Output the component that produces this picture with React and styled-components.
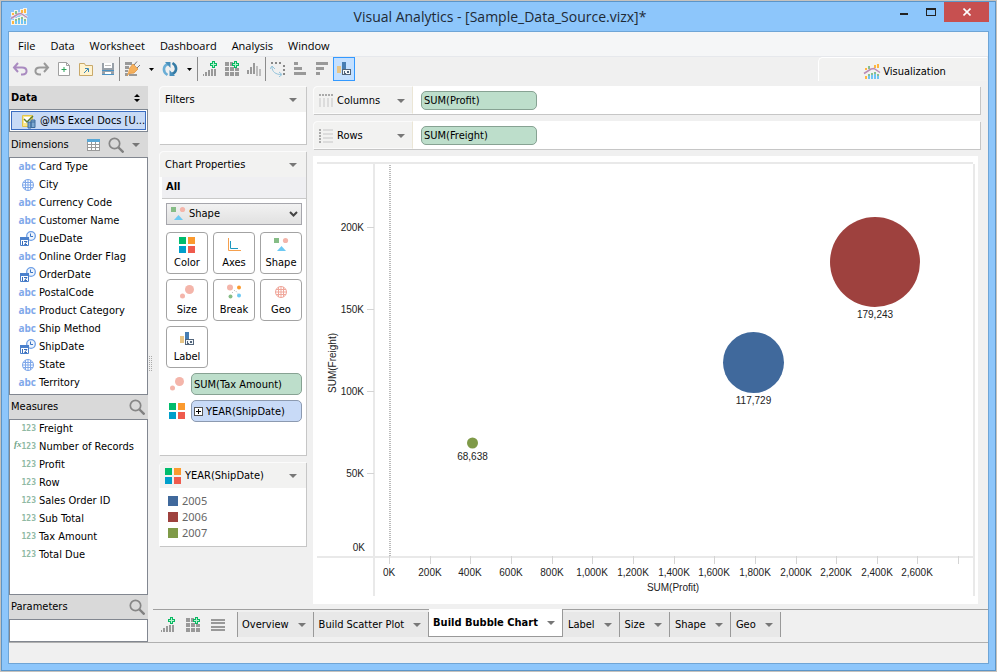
import { useState } from 'react';
import styled, { createGlobalStyle } from 'styled-components';

const GlobalStyle = createGlobalStyle`
    * {
        box-sizing: border-box;
    }
    body {
        margin: 0;
        color: #000;
        font-family: "DejaVu Sans Condensed", "Noto Sans", sans-serif;
        font-size: 11px;
        line-height: 16px;
    }
    button, select, input {
        font: inherit;
        color: inherit;
        margin: 0;
    }
    ul, h1, h2 {
        margin: 0;
        padding: 0;
        list-style: none;
        font: inherit;
    }
    svg {
        display: block;
        flex: none;
    }
`;

/* window frame */

const Frame = styled.div`
    min-height: 100vh;
    display: flex;
    border: 1px solid #c6c2bd;
`;

const Shell = styled.div`
    flex: 1;
    min-width: 0;
    display: flex;
    flex-direction: column;
    padding: 0 6px 6px;
    background: #8dc6fb;
    border: 1px solid #5c95c8;
`;

const TitleBar = styled.header`
    display: grid;
    grid-template-columns: 100px 1fr 100px;
    height: 29px;
    align-items: center;
    padding-left: 3px;
    h1 {
        font-family: "Open Sans", sans-serif;
        font-size: 14px;
        line-height: 20px;
        text-align: center;
        color: #1e2a36;
        white-space: nowrap;
    }
`;

const WindowButtons = styled.div`
    display: flex;
    justify-content: flex-end;
    align-self: start;
`;

const WindowButton = styled.button`
    width: ${p => (p.$close ? '45px' : '27px')};
    height: 20px;
    padding: 0;
    border: 0;
    display: flex;
    align-items: center;
    justify-content: center;
    background: ${p => (p.$close ? '#c75050' : 'transparent')};
`;

const Client = styled.div`
    flex: 1;
    display: flex;
    flex-direction: column;
    border: 1px solid #6fa5d6;
    background: #f0f0f0;
`;

const MenuBar = styled.nav`
    display: flex;
    gap: 1px;
    height: 25px;
    padding-left: 2px;
    background: #f5f6f7;
    border-bottom: 1px solid #e6e8ec;
`;

const MenuItem = styled.button`
    border: 0;
    padding: 4px 7px 0;
    background: transparent;
    font-family: "Open Sans", sans-serif;
    font-size: 11px;
    line-height: 18px;
`;

/* toolbar */

const ToolRow = styled.div`
    display: flex;
    justify-content: space-between;
    height: 29px;
    align-items: flex-start;
`;

const Tools = styled.div`
    display: flex;
    align-items: center;
`;

const ToolButton = styled.button`
    width: ${p => (p.$narrow ? '16px' : '22px')};
    height: 24px;
    padding: 0;
    display: flex;
    align-items: center;
    justify-content: center;
    background: ${p => (p.$on ? '#c4e0ff' : 'transparent')};
    border: 1px solid ${p => (p.$on ? '#3399ff' : 'transparent')};
`;

const Divider = styled.span`
    width: 1px;
    height: 24px;
    margin-right: 1px;
    background: #8c8c8c;
`;

const ViewTab = styled.button`
    display: flex;
    align-items: center;
    justify-content: center;
    gap: 3px;
    width: 169px;
    height: 24px;
    margin-right: 1px;
    padding: 4px 0 0 4px;
    border: 0;
    border-top: 1px solid #fff;
    border-left: 1px solid #fff;
    border-radius: 5px 0 0 0;
    background: #f2f2f1;
`;

/* body */

const Workspace = styled.div`
    flex: 1;
    display: flex;
`;

const Sidebar = styled.aside`
    width: 139px;
    display: flex;
    flex-direction: column;
    background: #d9d9d9;
`;

const SideHeader = styled.div`
    display: flex;
    align-items: center;
    gap: 8px;
    height: ${p => (p.$top ? '23px' : '24px')};
    padding: 0 ${p => (p.$inset ? '8px' : '3px')} 0 2px;
    background: #d9d9d9;
    h2 {
        flex: 1;
        font-weight: ${p => (p.$top ? 'bold' : 'normal')};
    }
`;

const IconButton = styled.button`
    padding: 0;
    border: 0;
    background: none;
    display: flex;
`;

const SourceButton = styled.button`
    display: flex;
    align-items: center;
    gap: 4px;
    height: 23px;
    margin-bottom: 1px;
    padding: 0 0 0 10px;
    white-space: nowrap;
    background: #c7daf6;
    border: 1px solid #7f8791;
    outline: 1px solid #3a6cc0;
    outline-offset: -3px;
    box-shadow: inset 0 0 0 1px #fff;
`;

const FieldList = styled.ul`
    flex: ${p => (p.$grow ? '1' : 'none')};
    min-height: 23px;
    padding-bottom: 2px;
    background: #fff;
    border: 1px solid #828790;
`;

const Field = styled.li`
    display: flex;
    align-items: center;
    height: 18px;
    padding-bottom: 1px;
    white-space: nowrap;
`;

const FieldIcon = styled.span`
    width: 29px;
    padding-right: 3px;
    display: flex;
    align-items: center;
    justify-content: flex-end;
`;

const TextGlyph = styled.span`
    padding-bottom: 2px;
    font-family: "Open Sans", sans-serif;
    font-weight: bold;
    font-size: 10px;
    color: #7fa8ea;
`;

const NumberGlyph = styled.span`
    font-family: "DejaVu Sans Mono", monospace;
    font-weight: bold;
    font-size: 8px;
    color: #8fb9a4;
`;

const CalcGlyph = styled.i`
    padding-bottom: 5px;
    font-family: "Liberation Serif", serif;
    font-weight: bold;
    font-size: 9px;
    color: #6fa58a;
`;

const Splitter = styled.div`
    width: 5px;
    display: flex;
    align-items: center;
    justify-content: center;
`;

const Main = styled.main`
    flex: 1;
    min-width: 0;
    display: flex;
    flex-direction: column;
`;

const Body = styled.div`
    flex: 1;
    display: flex;
    gap: 7px;
    padding: 0 10px 5px 6px;
`;

const Panels = styled.div`
    width: 147px;
    display: flex;
    flex-direction: column;
    gap: 7px;
`;

const Card = styled.section`
    background: #fff;
    border-radius: 5px 0 0 0;
    box-shadow: 1px 1px 0 #c6c6c6;
    padding-bottom: ${p => p.$bottom}px;
`;

const CardHeader = styled.div`
    display: flex;
    align-items: center;
    gap: 4px;
    height: 26px;
    padding: 1px 9px 0 5px;
    background: #f2f2f1;
    border: 1px solid #fbfbfb;
    border-width: 1px 0 0 1px;
    border-radius: 5px 0 0 0;
    h2 {
        flex: 1;
        white-space: nowrap;
    }
`;

const AllRow = styled.div`
    height: 22px;
    margin-left: 3px;
    padding: 2px 4px;
    font-weight: bold;
    background: #efeff2;
    border-bottom: 1px solid #c9c9c9;
`;

const CardContent = styled.div`
    display: flex;
    flex-direction: column;
    gap: 5px;
    padding: 4px 4px 0 7px;
`;

const Picker = styled.label`
    display: grid;
    align-items: center;
    margin-bottom: 2px;
    > * {
        grid-area: 1 / 1;
    }
    > svg {
        z-index: 1;
        margin-left: 4px;
        pointer-events: none;
    }
    > svg:last-child {
        justify-self: end;
        margin-right: 4px;
    }
`;

const Select = styled.select`
    appearance: none;
    height: 22px;
    padding: 0 20px 0 22px;
    border: 1px solid #a6a6ac;
    border-radius: 0;
    background: linear-gradient(#f2f2f2, #e1e1e1);
`;

const PropertyGrid = styled.div`
    display: grid;
    grid-template-columns: repeat(3, 42px);
    gap: 5px;
`;

const PropertyButton = styled.button`
    height: 42px;
    padding: 0 0 2px;
    display: flex;
    flex-direction: column;
    align-items: center;
    justify-content: flex-end;
    gap: 2px;
    background: #fff;
    border: 1px solid #a3a3a3;
    border-radius: 4px;
`;

const ShelfField = styled.div`
    display: flex;
    align-items: center;
    gap: 6px;
    padding-left: 3px;
`;

const Pill = styled.button`
    flex: ${p => (p.$width ? 'none' : '1')};
    width: ${p => (p.$width ? p.$width + 'px' : 'auto')};
    height: ${p => (p.$width ? '19px' : '22px')};
    display: flex;
    align-items: center;
    gap: 3px;
    padding: 1px 2px 0;
    white-space: nowrap;
    background: ${p => (p.$blue ? '#c8daf7' : '#bddecb')};
    border: 1px solid ${p => (p.$blue ? '#8c9ab0' : '#87a293')};
    border-radius: 5px;
`;

const Legend = styled.ul`
    padding: 5px 9px;
    color: #666;
    font-family: "Noto Sans", sans-serif;
    li {
        display: flex;
        align-items: center;
        gap: 4px;
        height: 16px;
    }
`;

const Swatch = styled.span`
    width: 10px;
    height: 10px;
    background: ${p => p.$color};
`;

const Canvas = styled.div`
    flex: 1;
    min-width: 0;
    display: flex;
    flex-direction: column;
    gap: 7px;
`;

const Shelf = styled.div`
    display: flex;
    align-items: center;
    height: 28px;
    margin-right: -2px;
    background: #fff;
    border-radius: 5px 0 0 0;
    box-shadow: 1px 1px 0 #c6c6c6;
`;

const ShelfLabel = styled.div`
    display: flex;
    align-items: center;
    gap: 3px;
    width: 100px;
    height: 28px;
    margin-right: 8px;
    padding: 1px 7px 0 4px;
    background: #f2f2f1;
    border: 1px solid #fbfbfb;
    border-right-color: #ebe6d6;
    border-radius: 5px 0 0 0;
    span {
        flex: 1;
    }
`;

const ChartArea = styled.div`
    flex: 1;
    background: #fff;
    svg {
        width: 100%;
        height: auto;
        font-family: "Liberation Sans", sans-serif;
        font-size: 10px;
        fill: #222;
    }
`;

const SheetBar = styled.div`
    display: flex;
    height: 33px;
    border-top: 1px solid #a0a0a0;
`;

const SheetTools = styled.div`
    display: flex;
    align-items: center;
    gap: 9px;
    width: 84px;
    height: 29px;
    padding-left: 7px;
`;

const SheetTab = styled.button`
    display: flex;
    align-items: center;
    gap: 9px;
    height: ${p => (p.$active ? '28px' : '25px')};
    margin-top: ${p => (p.$active ? '-1px' : '2px')};
    padding: 0 7px 0 ${p => (p.$first || p.$active ? '4px' : '5px')};
    border: 0;
    border-right: 1px solid #999;
    border-left: ${p => (p.$first ? '1px solid #999' : '0')};
    border-bottom: ${p => (p.$active ? '1px solid #999' : '0')};
    background: ${p => (p.$active ? '#fff' : '#e8e8e8')};
    font-weight: ${p => (p.$active ? 'bold' : 'normal')};
    white-space: nowrap;
`;

const StatusBar = styled.footer`
    height: 21px;
    border-top: 1px solid #b0b0b0;
`;

/* icons */

const Icon = ({ size = 16, children, ...rest }) => (
    <svg width={size} height={size} viewBox="0 0 16 16" fill="none" aria-hidden="true" {...rest}>{children}</svg>
);

const Caret = ({ color = '#777' }) => (
    <svg width="8" height="4" viewBox="0 0 8 4" aria-hidden="true"><path d="M0 0h8L4 4z" fill={color} /></svg>
);

const SmallCaret = () => (
    <svg width="5" height="3" viewBox="0 0 5 3" aria-hidden="true"><path d="M0 0h5L2.500 3z" fill="#000" /></svg>
);

const LogoIcon = ({ halo }) => {
    const bars = 'M1 4h2v2H1zM10 1h2v3h-2zM13 0h2v4h-2zM1 12h2v3H1zM4 2h2v3H4zM4 10h2v5H4zM7 9h2v6H7zM10 8h2v7h-2zM13 10h2v5h-2z';
    const line = 'M0 9.500L7 5l3-.5 6 4';
    return (
        <Icon overflow="visible">
            {halo && <path d={bars} stroke="#f3f3ee" strokeWidth="2" />}
            {halo && <path d={line} stroke="#f3f3ee" strokeWidth="3" />}
            <path d="M1 4h2v2H1zM10 1h2v3h-2zM13 0h2v4h-2zM1 12h2v3H1z" fill="#ffb640" />
            <path d="M4 2h2v3H4zM4 10h2v2H4zM7 9h2v2H7zM10 8h2v2h-2zM13 10h2v2h-2z" fill="#86c191" />
            <path d="M4 12h2v3H4zM7 11h2v4H7zM10 10h2v5h-2zM13 12h2v3h-2z" fill="#6fc4f4" />
            <path d={line} stroke="#b98bb5" strokeWidth="1.500" />
        </Icon>
    );
};

const UndoIcon = () => (
    <Icon><path d="M6 2L2 6.500 6 11M2 6.500h8c6 0 6 7 .5 7H9" stroke="#a98ac0" strokeWidth="2" /></Icon>
);
const RedoIcon = () => (
    <Icon><path d="M10 2l4 4.500L10 11M14 6.500H6c-6 0-6 7-.5 7H7" stroke="#999" strokeWidth="2" /></Icon>
);
const NewIcon = () => (
    <Icon>
        <path d="M2.500 1.500h8l3 3v10h-11z" fill="#fff" stroke="#a0a0a0" />
        <path d="M10.500 1.500v3h3" stroke="#a0a0a0" />
        <path d="M8 6v5M5.500 8.500h5" stroke="#2ca35a" />
    </Icon>
);
const OpenIcon = () => (
    <Icon>
        <path d="M1.500 2.500h5l1 2h7v10h-13z" fill="#fff3d0" stroke="#c9a96a" />
        <path d="M6 12l4-4M7 7.500h3.500V11" stroke="#3a87b5" />
    </Icon>
);
const SaveIcon = () => (
    <Icon shapeRendering="crispEdges">
        <path d="M2 2h12v12H2z" fill="#98a0a8" />
        <path d="M4 2h8v5H4z" fill="#fff" />
        <path d="M2 9h12v1H2zM2 13h12v1H2z" fill="#4a92c4" />
        <path d="M5 11h6v2H5z" fill="#fff" />
        <path d="M5 4h6v1H5z" fill="#bbb" />
    </Icon>
);
const ConnectIcon = () => (
    <Icon>
        <path d="M1 1h7v3H1zM1 5h4v3H1zM1 9h3v2H1zM1 12h3v3H1zM5 13h8v2H5z" fill="#999" />
        <path d="M5 8l4-5 5 5-4 4-5 .5L3 15" fill="#f5b05c" stroke="#df9440" strokeWidth=".8" />
        <path d="M10 4l3-3.500M13 7l3-3" stroke="#777" />
    </Icon>
);
const RefreshIcon = () => (
    <Icon>
        <path d="M5.500 14C.5 11 .8 5 6 3" stroke="#6aaed6" strokeWidth="2.600" />
        <path d="M10.500 2c5 3 4.700 9-.5 11" stroke="#357ba5" strokeWidth="2.600" />
        <path d="M3 1h5.500v6zM13 15H7.500V9z" fill="#4890bd" />
    </Icon>
);

const Plus = () => (
    <>
        <path d="M10 0h3v2h2v3h-2v2h-3V5H8V2h2z" fill="#08b862" />
        <path d="M11 1h1v2h2v1h-2v2h-1V4H9V3h2z" fill="#b6f4cf" />
    </>
);
const AddChartIcon = () => (
    <Icon shapeRendering="crispEdges">
        <path d="M1 13h1v2H1zM3 11h2v4H3zM6 9h2v6H6zM9 8h2v7H9zM12 8h2v7h-2z" fill="#999" />
        <Plus />
    </Icon>
);
const AddBoardIcon = () => (
    <Icon shapeRendering="crispEdges">
        <path d="M1 1h4v4H1zM6 1h3v4H6zM1 6h4v4H1zM6 6h4v4H6zM11 7h4v3h-4zM1 11h4v4H1zM6 11h4v4H6zM11 11h4v4h-4z" fill="#999" />
        <Plus />
    </Icon>
);
const BarsIcon = () => (
    <Icon shapeRendering="crispEdges">
        <path d="M1 9h2v4H1zM4 6h2v7H4zM7 2h2v11H7z" fill="#999" />
        <path d="M10 5h2v10h-2zM13 8h2v7h-2z" fill="#bdbdbd" />
    </Icon>
);
const SwapIcon = () => (
    <Icon>
        <path d="M1 1h2v2H1zM5 1h2v2H5zM9 1h2v2H9zM13 4h2v2h-2zM13 8h2v2h-2zM13 12h2v2h-2z" fill="#888" />
        <path d="M2 6c0 5 4 7.500 9 7.500M0 8l2-3 3 3M9 11l3 2.500L9 16" stroke="#92c3dc" />
    </Icon>
);
const SortUpIcon = () => (
    <Icon shapeRendering="crispEdges"><path d="M2 1h4v3H2zM2 6h8v3H2zM2 11h12v3H2z" fill="#999" /></Icon>
);
const SortDownIcon = () => (
    <Icon shapeRendering="crispEdges"><path d="M2 1h12v3H2zM2 6h8v3H2zM2 11h4v3H2z" fill="#999" /></Icon>
);
const LabelIcon = () => (
    <Icon shapeRendering="crispEdges">
        <path d="M1 5h4v7H1z" fill="#e8c586" />
        <path d="M6 1h4v9H6z" fill="#467db3" />
        <path d="M6.500 8.500h8v5h-8z" fill="#f4f8fb" stroke="#53657a" />
        <path d="M8.500 10v2H10M11.500 10.500h1v1h-1z" stroke="#53657a" />
    </Icon>
);
const ListIcon = () => (
    <Icon shapeRendering="crispEdges"><path d="M1 2h14v2H1zM1 5h14v2H1zM1 9h14v2H1zM1 12h14v2H1z" fill="#999" /></Icon>
);
const ColorIcon = () => (
    <Icon shapeRendering="crispEdges">
        <path d="M0 0h7v7H0z" fill="#00bc6c" />
        <path d="M9 0h7v7H9z" fill="#fb9a2e" />
        <path d="M0 9h7v7H0z" fill="#009fcb" />
        <path d="M9 9h7v7H9z" fill="#ef5b4e" />
    </Icon>
);
const AxesIcon = () => (
    <Icon>
        <path d="M2.500 1v12.500H15" stroke="#f5a04e" />
        <path d="M4.500 4v7.500H12" stroke="#1c98c0" />
    </Icon>
);
const ShapeIcon = () => (
    <Icon>
        <path d="M1 1h5v5H1z" fill="#86bd86" />
        <circle cx="12.500" cy="3.500" r="2.600" fill="#f4b5aa" />
        <path d="M4 14l4.500-5 4.500 5z" fill="#6dc9f3" />
    </Icon>
);
const SizeIcon = () => (
    <Icon>
        <circle cx="10.500" cy="5.500" r="4.500" fill="#f4b5aa" />
        <circle cx="3.500" cy="12" r="2.500" fill="#f4b5aa" />
    </Icon>
);
const BreakIcon = () => (
    <Icon>
        <path d="M6 9l3-3 4 5" stroke="#aaa" strokeDasharray="1 2" />
        <circle cx="4" cy="3.500" r="3" fill="#f4b5aa" />
        <circle cx="13" cy="3.500" r="2" fill="#fb9a2e" />
        <circle cx="4.500" cy="12.500" r="2" fill="#86bd86" />
        <circle cx="13" cy="11.500" r="2" fill="#6dc9f3" />
    </Icon>
);
const GlobeIcon = ({ color = '#f0a79b' }) => (
    <Icon>
        <circle cx="8" cy="8" r="5.500" stroke={color} />
        <path d="M2 8h12M3 5.500h10M3 10.500h10M8 2v12M5.500 3v10M10.500 3v10" stroke={color} />
    </Icon>
);
const DateIcon = () => (
    <Icon>
        <circle cx="11" cy="5" r="4.300" fill="#eef4fc" stroke="#6c9ee6" strokeWidth="1.300" />
        <path d="M10.500 2.500v3h2.500" stroke="#3a74c4" />
        <path d="M.5 6.500h8v8h-8z" fill="#fff" stroke="#4a80cc" />
        <path d="M0 6h9v3H0z" fill="#4a80cc" />
        <path d="M2.500 10v4M4 10.500h3L4.500 13.500H7" stroke="#3a6cb8" />
    </Icon>
);
const SearchIcon = () => (
    <Icon>
        <circle cx="6.500" cy="6.500" r="5.200" stroke="#868686" strokeWidth="1.700" />
        <path d="M10.500 10.500l5 5" stroke="#808080" strokeWidth="2.400" />
    </Icon>
);
const TableIcon = () => (
    <svg width="13" height="12" viewBox="0 0 13 12" shapeRendering="crispEdges" aria-hidden="true">
        <path d="M0 0h13v12H0z" fill="#9a9a9a" />
        <path d="M0 0h13v3H0z" fill="#5aa7d5" />
        <path d="M1 3h3v2H1zM5 3h3v2H5zM9 3h3v2H9zM1 6h3v2H1zM5 6h3v2H5zM9 6h3v2H9zM1 9h3v2H1zM5 9h3v2H5zM9 9h3v2H9z" fill="#fff" />
    </svg>
);
const SourceIcon = () => (
    <Icon>
        <path d="M2.500 2.500h10v11h-10z" fill="#fbe88a" stroke="#e3c54c" />
        <path d="M4 4h6v6H4z" fill="#fff" />
        <path d="M4 6l3 3 6-6" stroke="#5c7b2e" strokeWidth="1.500" />
        <path d="M8 9h3v6H8zM11 7h4v7.500h-4z" fill="#7da9d2" stroke="#3f6d9d" />
        <path d="M11 9h4" stroke="#3f6d9d" />
    </Icon>
);
const UpDownIcon = () => (
    <svg width="6" height="8" viewBox="0 0 6 8" aria-hidden="true"><path d="M0 3l3-3 3 3zM0 5h6L3 8z" fill="#000" /></svg>
);
const ColumnsIcon = () => (
    <Icon shapeRendering="crispEdges">
        <path d="M1 1h2v2H1zM4 1h2v2H4zM7 1h2v2H7zM10 1h2v2h-2zM13 1h2v2h-2z" fill="#aaa" />
        <path d="M1 5h2v9H1zM5 5h2v9H5zM9 5h2v9H9zM13 5h2v9h-2z" fill="#dcdcdc" />
    </Icon>
);
const RowsIcon = () => (
    <Icon shapeRendering="crispEdges">
        <path d="M1 1h2v2H1zM1 4h2v2H1zM1 7h2v2H1zM1 10h2v2H1zM1 13h2v2H1z" fill="#aaa" />
        <path d="M5 1h10v2H5zM5 5h10v2H5zM5 9h10v2H5zM5 13h10v2H5z" fill="#dcdcdc" />
    </Icon>
);
const ExpandIcon = () => (
    <svg width="9" height="9" viewBox="0 0 9 9" shapeRendering="crispEdges" aria-hidden="true">
        <path d="M.5.5h8v8h-8z" fill="#fff" stroke="#555" />
        <path d="M2 4h5v1H2zM4 2h1v5H4z" fill="#000" />
    </svg>
);
const ChevronIcon = () => (
    <svg width="9" height="6" viewBox="0 0 9 6" fill="none" aria-hidden="true"><path d="M1 1l3.500 3.500L8 1" stroke="#444" strokeWidth="2" /></svg>
);

/* data */

const menus = ['File', 'Data', 'Worksheet', 'Dashboard', 'Analysis', 'Window'];

const dimensions = [
    ['Card Type', 'text'],
    ['City', 'geo'],
    ['Currency Code', 'text'],
    ['Customer Name', 'text'],
    ['DueDate', 'date'],
    ['Online Order Flag', 'text'],
    ['OrderDate', 'date'],
    ['PostalCode', 'text'],
    ['Product Category', 'text'],
    ['Ship Method', 'text'],
    ['ShipDate', 'date'],
    ['State', 'geo'],
    ['Territory', 'text'],
];

const measures = [
    ['Freight', 'number'],
    ['Number of Records', 'calc'],
    ['Profit', 'number'],
    ['Row', 'number'],
    ['Sales Order ID', 'number'],
    ['Sub Total', 'number'],
    ['Tax Amount', 'number'],
    ['Total Due', 'number'],
];

const tools = [
    ['Undo', UndoIcon], ['Redo', RedoIcon], ['New', NewIcon], ['Open', OpenIcon], ['Save', SaveIcon],
    null,
    ['Connect', ConnectIcon], ['Connect options', SmallCaret], ['Refresh', RefreshIcon], ['Refresh options', SmallCaret],
    null,
    ['Add worksheet', AddChartIcon], ['Add dashboard', AddBoardIcon], ['Duplicate', BarsIcon],
    null,
    ['Swap axes', SwapIcon], ['Sort ascending', SortUpIcon], ['Sort descending', SortDownIcon], ['Show labels', LabelIcon],
];

const properties = [
    ['Color', ColorIcon], ['Axes', AxesIcon], ['Shape', ShapeIcon],
    ['Size', SizeIcon], ['Break', BreakIcon], ['Geo', GlobeIcon], ['Label', LabelIcon],
];

const legend = [['2005', '#40699c'], ['2006', '#9e413e'], ['2007', '#7f9a48']];

const sheets = ['Overview', 'Build Scatter Plot', 'Build Bubble Chart', 'Label', 'Size', 'Shape', 'Geo'];

const bubbles = [
    { x: 562, y: 106, r: 45, color: '#9e413e', label: '179,243' },
    { x: 440.5, y: 206.5, r: 30.5, color: '#40699c', label: '117,729' },
    { x: 159.5, y: 287, r: 5.5, color: '#7f9a48', label: '68,638' },
];

const yTicks = [['200K', 71.5], ['150K', 153.5], ['100K', 235.5], ['50K', 317.5]];
const xTicks = ['0K', '200K', '400K', '600K', '800K', '1,000K', '1,200K', '1,400K', '1,600K', '1,800K', '2,000K', '2,200K', '2,400K', '2,600K', ''];

function FieldType({ type }) {
    return (
        <FieldIcon>
            {type === 'text' && <TextGlyph>abc</TextGlyph>}
            {type === 'geo' && <GlobeIcon color="#7fa8ea" />}
            {type === 'date' && <DateIcon />}
            {type === 'calc' && <CalcGlyph>fx</CalcGlyph>}
            {(type === 'number' || type === 'calc') && <NumberGlyph>123</NumberGlyph>}
        </FieldIcon>
    );
}

function BubbleChart({ labels }) {
    return (
        <svg viewBox="0 0 665 448" role="img" aria-label="Bubble chart of SUM(Freight) by SUM(Profit)">
            <path d="M4 7h656M4 401h656M61 8v432M661 8v432" stroke="#e9e9e9" strokeWidth="2" />
            <path d="M77 9v391" stroke="#bbb" strokeWidth="2" strokeDasharray="1 1" />
            {yTicks.map(([label, y]) => (
                <g key={label}>
                    <path d={`M54 ${y}h7`} stroke="#d4d4d4" />
                    <text x="51" y={y + 3.5} textAnchor="end">{label}</text>
                </g>
            ))}
            <text x="52" y="395" textAnchor="end">0K</text>
            {xTicks.map((label, i) => {
                const x = Math.round(76 + i * 40.65) + 0.5;
                return (
                    <g key={i}>
                        <path d={`M${x} 400v8`} stroke="#d4d4d4" />
                        <text x={x - 0.5} y="420" textAnchor="middle">{label}</text>
                    </g>
                );
            })}
            <text x="360" y="435" textAnchor="middle">SUM(Profit)</text>
            <text x="23" y="207" textAnchor="middle" transform="rotate(-90 23 207)">SUM(Freight)</text>
            {bubbles.map(b => (
                <g key={b.label}>
                    <circle cx={b.x} cy={b.y} r={b.r} fill={b.color} />
                    {labels && <text x={b.x} y={Math.round(b.y + b.r + 11)} textAnchor="middle">{b.label}</text>}
                </g>
            ))}
        </svg>
    );
}

export default function App() {
    const [sheet, setSheet] = useState('Build Bubble Chart');
    const [showLabels, setShowLabels] = useState(true);

    return (
        <>
            <GlobalStyle />
            <Frame>
                <Shell>
                    <TitleBar>
                        <LogoIcon halo />
                        <h1>Visual Analytics - [Sample_Data_Source.vizx]*</h1>
                        <WindowButtons>
                            <WindowButton aria-label="Minimize">
                                <svg width="8" height="8" viewBox="0 0 8 8"><path d="M0 5h8v2H0z" fill="#222" /></svg>
                            </WindowButton>
                            <WindowButton aria-label="Maximize">
                                <svg width="10" height="8" viewBox="0 0 10 8" shapeRendering="crispEdges"><path d="M0 0h10v8H0zM1 2v5h8V2z" fill="#222" fillRule="evenodd" /></svg>
                            </WindowButton>
                            <WindowButton $close aria-label="Close">
                                <svg width="8" height="8" viewBox="0 0 8 8"><path d="M.5.5l7 7M7.500.5l-7 7" stroke="#fff" strokeWidth="1.600" /></svg>
                            </WindowButton>
                        </WindowButtons>
                    </TitleBar>

                    <Client>
                        <MenuBar>
                            {menus.map(m => <MenuItem key={m}>{m}</MenuItem>)}
                        </MenuBar>

                        <ToolRow>
                            <Tools>
                                {tools.map((tool, i) => {
                                    if (!tool) return <Divider key={i} />;
                                    const [name, Glyph] = tool;
                                    const toggle = name === 'Show labels';
                                    return (
                                        <ToolButton
                                            key={name}
                                            aria-label={name}
                                            $narrow={Glyph === SmallCaret}
                                            $on={toggle && showLabels}
                                            onClick={toggle ? () => setShowLabels(!showLabels) : undefined}
                                        >
                                            <Glyph />
                                        </ToolButton>
                                    );
                                })}
                            </Tools>
                            <ViewTab><LogoIcon />Visualization</ViewTab>
                        </ToolRow>

                        <Workspace>
                            <Sidebar>
                                <SideHeader $top $inset>
                                    <h2>Data</h2>
                                    <IconButton aria-label="Sort sources"><UpDownIcon /></IconButton>
                                </SideHeader>
                                <SourceButton><SourceIcon /><span>@MS Excel Docs [U...</span></SourceButton>
                                <SideHeader $inset>
                                    <h2>Dimensions</h2>
                                    <IconButton aria-label="View data"><TableIcon /></IconButton>
                                    <IconButton aria-label="Search dimensions"><SearchIcon /></IconButton>
                                    <IconButton aria-label="Dimension options"><Caret /></IconButton>
                                </SideHeader>
                                <FieldList>
                                    {dimensions.map(([name, type]) => (
                                        <Field key={name}><FieldType type={type} />{name}</Field>
                                    ))}
                                </FieldList>
                                <SideHeader>
                                    <h2>Measures</h2>
                                    <IconButton aria-label="Search measures"><SearchIcon /></IconButton>
                                </SideHeader>
                                <FieldList $grow>
                                    {measures.map(([name, type]) => (
                                        <Field key={name}><FieldType type={type} />{name}</Field>
                                    ))}
                                </FieldList>
                                <SideHeader>
                                    <h2>Parameters</h2>
                                    <IconButton aria-label="Search parameters"><SearchIcon /></IconButton>
                                </SideHeader>
                                <FieldList />
                            </Sidebar>

                            <Splitter>
                                <svg width="3" height="16" viewBox="0 0 3 16" aria-hidden="true">
                                    <path d="M.5 0v16M2.500 0v16" stroke="#aaa" strokeDasharray="1 1" />
                                </svg>
                            </Splitter>

                            <Main>
                                <Body>
                                    <Panels>
                                        <Card $bottom={32}>
                                            <CardHeader>
                                                <h2>Filters</h2>
                                                <IconButton aria-label="Filter options"><Caret /></IconButton>
                                            </CardHeader>
                                        </Card>
                                        <Card $bottom={33}>
                                            <CardHeader>
                                                <h2>Chart Properties</h2>
                                                <IconButton aria-label="Chart options"><Caret /></IconButton>
                                            </CardHeader>
                                            <AllRow>All</AllRow>
                                            <CardContent>
                                                <Picker>
                                                    <ShapeIcon />
                                                    <Select aria-label="Chart type">
                                                        <option>Shape</option>
                                                    </Select>
                                                    <ChevronIcon />
                                                </Picker>
                                                <PropertyGrid>
                                                    {properties.map(([name, Glyph]) => (
                                                        <PropertyButton key={name}><Glyph />{name}</PropertyButton>
                                                    ))}
                                                </PropertyGrid>
                                                <ShelfField><SizeIcon /><Pill>SUM(Tax Amount)</Pill></ShelfField>
                                                <ShelfField><ColorIcon /><Pill $blue><ExpandIcon />YEAR(ShipDate)</Pill></ShelfField>
                                            </CardContent>
                                        </Card>
                                        <Card $bottom={0}>
                                            <CardHeader>
                                                <ColorIcon />
                                                <h2>YEAR(ShipDate)</h2>
                                                <IconButton aria-label="Legend options"><Caret /></IconButton>
                                            </CardHeader>
                                            <Legend>
                                                {legend.map(([year, color]) => (
                                                    <li key={year}><Swatch $color={color} />{year}</li>
                                                ))}
                                            </Legend>
                                        </Card>
                                    </Panels>

                                    <Canvas>
                                        <Shelf>
                                            <ShelfLabel>
                                                <ColumnsIcon /><span>Columns</span>
                                                <IconButton aria-label="Column options"><Caret /></IconButton>
                                            </ShelfLabel>
                                            <Pill $width={116}>SUM(Profit)</Pill>
                                        </Shelf>
                                        <Shelf>
                                            <ShelfLabel>
                                                <RowsIcon /><span>Rows</span>
                                                <IconButton aria-label="Row options"><Caret /></IconButton>
                                            </ShelfLabel>
                                            <Pill $width={116}>SUM(Freight)</Pill>
                                        </Shelf>
                                        <ChartArea><BubbleChart labels={showLabels} /></ChartArea>
                                    </Canvas>
                                </Body>

                                <SheetBar>
                                    <SheetTools>
                                        <IconButton aria-label="New worksheet"><AddChartIcon /></IconButton>
                                        <IconButton aria-label="New dashboard"><AddBoardIcon /></IconButton>
                                        <IconButton aria-label="All sheets"><ListIcon /></IconButton>
                                    </SheetTools>
                                    {sheets.map((name, i) => (
                                        <SheetTab
                                            key={name}
                                            $first={i === 0}
                                            $active={name === sheet}
                                            onClick={() => setSheet(name)}
                                        >
                                            {name}<Caret />
                                        </SheetTab>
                                    ))}
                                </SheetBar>
                            </Main>
                        </Workspace>
                        <StatusBar />
                    </Client>
                </Shell>
            </Frame>
        </>
    );
}
